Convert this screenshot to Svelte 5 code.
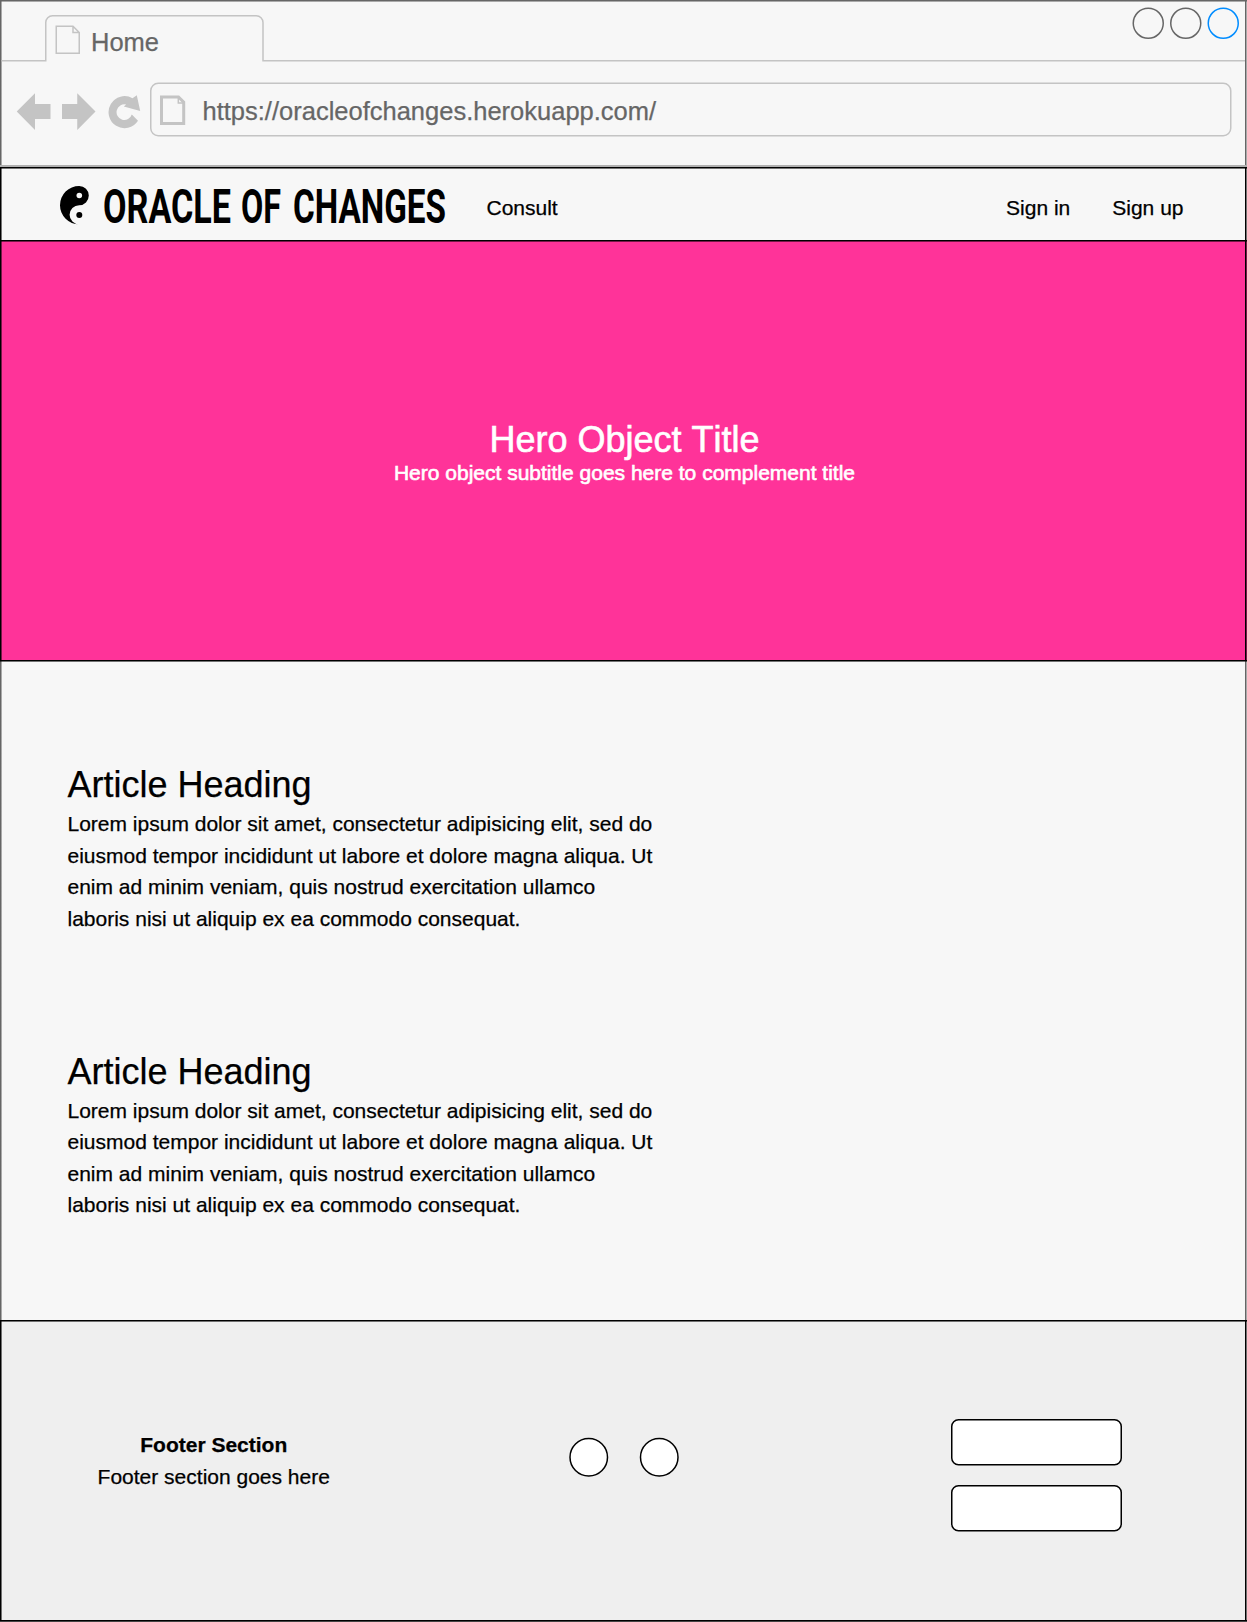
<script>
  const articles = [1, 2];
  const buttons = [1, 2];
</script>

<div class="window">
  <header class="chrome">
    <div class="tabs">
      <svg class="outline" width="1247" height="62" viewBox="0 0 1247 62">
        <path d="M1.5 60.75H45.75V22.5a6.75 6.75 0 0 1 6.75-6.75H256.250a6.75 6.75 0 0 1 6.75 6.75V60.75H1245" />
      </svg>
      <div class="tab">
        <svg width="26" height="30" viewBox="0 0 26 30">
          <path class="page" d="M1.25 1.25H18L24.25 7.5V28.25H1.25ZM18 1.25V7.5H24.25" stroke-width="1.5" />
        </svg>
        <span>Home</span>
      </div>
      <svg class="controls" width="108" height="34" viewBox="0 0 108 34">
        <circle cx="16.25" cy="16.25" r="15" />
        <circle cx="53.75" cy="16.25" r="15" />
        <circle class="active" cx="91.25" cy="16.25" r="15" />
      </svg>
    </div>
    <div class="toolbar">
      <svg class="arrows" width="134" height="40" viewBox="0 0 134 40">
        <path d="M.75 19.5 19 1.200v10.800H34.500V27H19v11Z" />
        <path d="M79.500 19.500 61.250 1.200v10.800H46V27H61.250v11Z" />
        <path d="M122 28.800A16 16 0 1 1 116.500 6.200L120.800 3.200 124.200 19 107.800 14.600 110.200 12.600A7.800 7.800 0 1 0 115.800 22.500Z" />
      </svg>
      <div class="address">
        <svg class="outline" width="1082" height="55" viewBox="0 0 1082 55">
          <rect x=".75" y="1.25" width="1080" height="52.500" rx="7.500" />
        </svg>
        <svg width="26" height="32" viewBox="0 0 26 32">
          <path class="page" d="M1.500 2H18.500L23.700 7.200V28.500H1.500Z" stroke-width="3" />
          <path class="page" d="M18.300 2V8H24" stroke-width="1.500" />
        </svg>
        <span>https://oracleofchanges.herokuapp.com/</span>
      </div>
    </div>
  </header>

  <nav class="navbar">
    <svg class="brand" width="392" height="70" viewBox="0 -15 392 70">
      <path d="M20.200 2A19.200 19.200 0 0 0 20.200 40.400 9.600 9.600 0 0 1 20.200 21.200 9.600 9.600 0 0 0 20.200 2Z" />
      <circle class="light" cx="20.300" cy="11.500" r="2.800" />
      <circle cx="20.300" cy="31" r="3" />
      <g transform="scale(.69 1)">
        <text x="63.800" y="38.500" textLength="185.500" lengthAdjust="spacingAndGlyphs">ORACLE</text>
        <text x="263.800" y="38.500" textLength="58" lengthAdjust="spacingAndGlyphs">OF</text>
        <text x="339.100" y="38.500" textLength="221.700" lengthAdjust="spacingAndGlyphs">CHANGES</text>
      </g>
    </svg>
    <a class="consult" href="#consult">Consult</a>
    <a class="signin" href="#signin">Sign in</a>
    <a class="signup" href="#signup">Sign up</a>
  </nav>

  <section class="hero">
    <h1>Hero Object Title</h1>
    <p>Hero object subtitle goes here to complement title</p>
  </section>

  <main>
    {#each articles as id (id)}
      <article>
        <h2>Article Heading</h2>
        <p>
          Lorem ipsum dolor sit amet, consectetur adipisicing elit, sed do eiusmod tempor incididunt
          ut labore et dolore magna aliqua. Ut enim ad minim veniam, quis nostrud exercitation
          ullamco laboris nisi ut aliquip ex ea commodo consequat.
        </p>
      </article>
    {/each}
  </main>

  <footer>
    <div class="about">
      <strong>Footer Section</strong>
      <span>Footer section goes here</span>
    </div>
    <svg class="dots" width="112" height="40" viewBox="0 0 112 40">
      <circle cx="19.750" cy="20.250" r="18.750" />
      <circle cx="90.250" cy="20.250" r="18.750" />
    </svg>
    <div class="buttons">
      {#each buttons as id (id)}
        <svg width="172" height="48" viewBox="0 0 172 48">
          <rect x=".75" y=".75" width="169.500" height="45" rx="6.750" />
        </svg>
      {/each}
    </div>
  </footer>
</div>

<style>
  :global(body) {
    margin: 0;
    background: #f7f7f7;
  }

  .window {
    width: 1247px;
    height: 1622px;
    overflow: hidden;
    font: 21px/31.5px 'Liberation Sans', Arial, sans-serif;
    color: #000;
    font-kerning: none;
    -webkit-text-stroke: 0.25px currentColor;
  }

  .window * {
    box-sizing: border-box;
  }

  svg {
    display: block;
    flex: none;
    fill: none;
  }

  h1,
  h2,
  p {
    margin: 0;
    font-weight: 400;
  }

  /* One-and-a-half pixel rules: a solid pixel followed by a half-tone one. */
  .chrome,
  .navbar,
  .hero,
  main,
  footer {
    --rule: #000;
    --soft: #0008;
    --fill: #f7f7f7;
    background:
      linear-gradient(var(--rule) 50%, var(--soft) 50%) top / 100% 2px no-repeat,
      linear-gradient(90deg, var(--rule) 50%, var(--soft) 50%) left / 2px 100% no-repeat,
      linear-gradient(90deg, var(--rule) 50%, var(--soft) 50%) right / 2px 100% no-repeat,
      var(--fill);
  }

  .chrome {
    --rule: #666;
    --soft: #6668;
    height: 167px;
    border-bottom: 2px solid #b0b0b0;
  }

  .tabs {
    position: relative;
    height: 62px;
    display: flex;
    justify-content: space-between;
    padding: 7px 7px 0 55px;
  }

  .outline {
    position: absolute;
    top: 0;
    left: 0;
    stroke: #c4c4c4;
    stroke-width: 1.5;
  }

  .page {
    stroke: #c4c4c4;
  }

  .tab {
    display: flex;
    gap: 10px;
    padding-top: 18px;
    font-size: 25.5px;
    line-height: 34px;
    color: #666;
  }

  .controls {
    stroke: #666;
    stroke-width: 1.5;
  }

  .active {
    stroke: #008cff;
  }

  .toolbar {
    display: flex;
    padding: 20px 15px 0 16px;
  }

  .arrows {
    margin-top: 10px;
    fill: #c4c4c4;
  }

  .address {
    position: relative;
    display: flex;
    gap: 16.5px;
    width: 1082px;
    height: 55px;
    padding: 13px 0 0 10px;
    font-size: 25.5px;
    line-height: 34px;
    color: #666;
  }

  .address span {
    margin-top: -1px;
  }

  .navbar {
    height: 73px;
    display: flex;
    padding: 2px 0 0 59px;
  }

  .brand {
    fill: #000;
    -webkit-text-stroke: 0;
  }

  .brand text {
    font: 700 49px Roboto, 'Liberation Sans', sans-serif;
  }

  .light {
    fill: #f7f7f7;
  }

  .navbar a {
    color: inherit;
    text-decoration: none;
    padding-top: 23px;
  }

  .consult {
    margin-left: 35.5px;
  }

  .signin {
    margin-left: auto;
  }

  .signup {
    margin: 0 63.5px 0 42px;
  }

  .hero {
    --fill: #ff3399;
    height: 420px;
    padding: 179px 0 0 2px;
    text-align: center;
    color: #fff;
    -webkit-text-stroke-width: 0.6px;
    -webkit-text-stroke-color: #fff;
  }

  .hero h1 {
    font-size: 36px;
    line-height: 41px;
  }

  .hero p {
    line-height: 26px;
  }

  main {
    height: 660px;
    padding: 104px 0 0 67.5px;
    background:
      linear-gradient(#000 50%, #0008 50%) top / 100% 2px no-repeat,
      linear-gradient(90deg, #666 50%, #6668 50%) left / 2px 100% no-repeat,
      linear-gradient(90deg, #666 50%, #6668 50%) right / 2px 100% no-repeat,
      #f7f7f7;
  }

  article {
    width: 590px;
    height: 286.5px;
  }

  h2 {
    font-size: 36px;
    line-height: 42px;
    padding-bottom: 2px;
  }

  footer {
    --fill: #efefef;
    height: 302px;
    display: flex;
    border-bottom: 1px solid #444;
    box-shadow: inset 0 -1px #000;
  }

  .about {
    display: flex;
    flex-direction: column;
    align-items: center;
    width: 427.5px;
    padding-top: 109px;
  }

  .dots {
    margin: 117px 0 0 141.5px;
    fill: #fff;
    stroke: #000;
    stroke-width: 1.5;
  }

  .buttons {
    display: flex;
    flex-direction: column;
    gap: 18px;
    margin: 99px 0 0 270px;
    stroke: #000;
    stroke-width: 1.5;
  }

  .buttons svg {
    fill: #fff;
  }
</style>
